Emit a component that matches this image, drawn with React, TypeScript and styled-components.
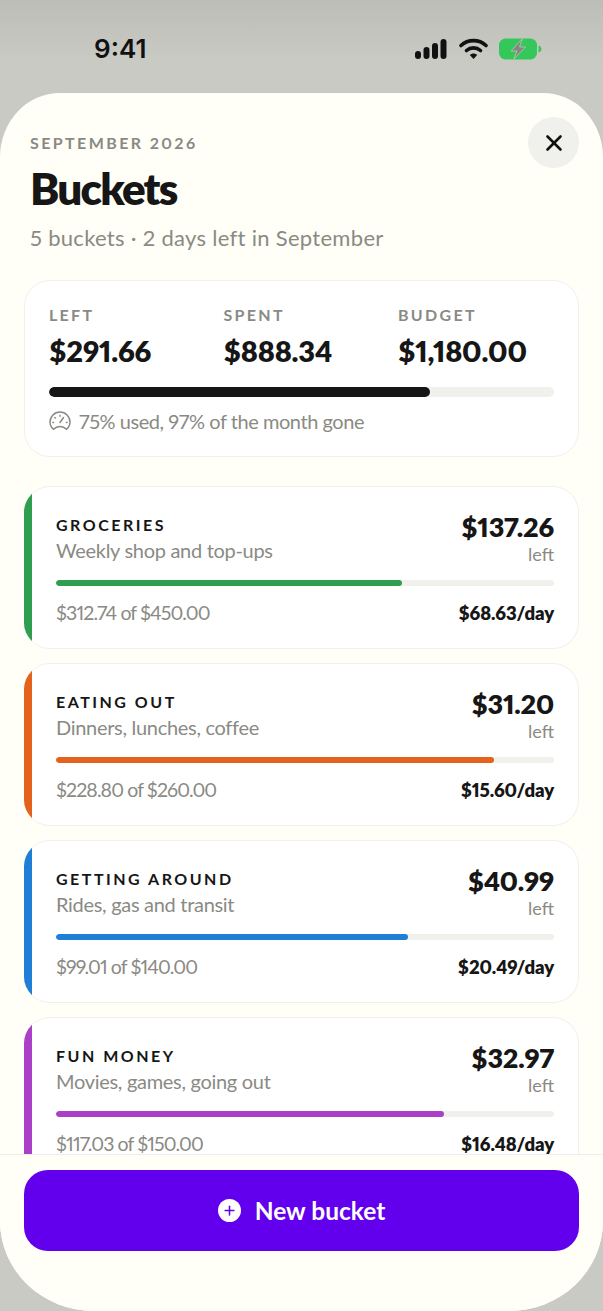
import React from "react";
import styled, { createGlobalStyle } from "styled-components";
import { Plus, X } from "lucide-react";

const GlobalStyle = createGlobalStyle`
  html, body {
    margin: 0;
    padding: 0;
    background: #c9c9c3;
    font-family: "Lato", "Liberation Sans", sans-serif;
    font-variant-numeric: proportional-nums;
  }
`;

const Screen = styled.div`
  width: 603px;
  height: 1311px;
  display: flex;
  flex-direction: column;
  overflow: hidden;
  background: linear-gradient(#bdbdb8 0, #cacac4 60px, #cacac4 100%);
`;

const StatusBar = styled.div`
  height: 93px;
  flex: none;
  display: flex;
  align-items: flex-start;
  justify-content: space-between;
  padding: 32px 61px 0 94px;
  box-sizing: border-box;
`;

const Clock = styled.div`
  font-family: "Inter", sans-serif;
  font-size: 26px;
  line-height: 34px;
  font-weight: 600;
  color: #111;
`;

const StatusIcons = styled.div`
  display: flex;
  align-items: center;
  gap: 11.500px;
  height: 34px;
`;

const Sheet = styled.div`
  flex: 1;
  min-height: 0;
  display: flex;
  flex-direction: column;
  overflow: hidden;
  background: #fffff7;
  border-radius: 60px 60px 94px 94px / 64px 64px 90px 90px;
`;

const Scroller = styled.div`
  flex: 1;
  min-height: 0;
  overflow: hidden;
  padding: 0 24px;
`;

const Header = styled.div`
  position: relative;
  padding: 38px 6px 0;
  height: 187px;
  box-sizing: border-box;
`;

const Eyebrow = styled.div`
  font-size: 16px;
  line-height: 24px;
  font-weight: 700;
  letter-spacing: 2.4px;
  color: #8a8a84;
`;

const Title = styled.h1`
  margin: 8px 0 0;
  font-size: 44px;
  line-height: 50px;
  font-weight: 800;
  letter-spacing: -1.8px;
  color: #161616;
`;

const Subtitle = styled.div`
  margin-top: 11px;
  font-size: 22px;
  line-height: 28px;
  font-weight: 400;
  letter-spacing: 0.3px;
  color: #8a8a84;
`;

const CloseButton = styled.button`
  position: absolute;
  top: 24px;
  right: 0;
  width: 51px;
  height: 51px;
  border: 0;
  padding: 0;
  border-radius: 50%;
  background: #f0f0ec;
  color: #111;
  display: flex;
  align-items: center;
  justify-content: center;
`;

const Card = styled.div`
  background: #fff;
  border: 1px solid #f1f1ea;
  box-sizing: border-box;
  border-radius: 26px;
`;

const Summary = styled(Card)`
  height: 177px;
  padding: 23px 24px 0;
`;

const Stats = styled.div`
  display: grid;
  grid-template-columns: repeat(3, 174.5px);
`;

const StatLabel = styled.div`
  font-size: 16px;
  line-height: 22px;
  font-weight: 700;
  letter-spacing: 2.3px;
  color: #8a8a84;
`;

const StatValue = styled.div`
  margin-top: 6px;
  font-size: 29px;
  line-height: 38px;
  font-weight: 800;
  letter-spacing: -0.2px;
  color: #161616;
`;

const Track = styled.div<{ $height: number }>`
  height: ${(p) => p.$height}px;
  border-radius: ${(p) => p.$height / 2}px;
  background: #f0f0ec;
  overflow: hidden;
`;

const Fill = styled.div<{ $color: string }>`
  height: 100%;
  border-radius: inherit;
  background: ${(p) => p.$color};
`;

const SummaryTrack = styled(Track)`
  margin-top: 17px;
`;

const PaceRow = styled.div`
  margin-top: 10px;
  display: flex;
  align-items: center;
  gap: 8px;
  font-size: 20px;
  line-height: 28px;
  letter-spacing: -0.45px;
  color: #8a8a84;
`;

const BucketList = styled.div`
  margin-top: 29px;
  display: flex;
  flex-direction: column;
  gap: 14px;
`;

const BucketCard = styled(Card)`
  height: 163px;
  flex: none;
  display: flex;
  overflow: hidden;
  border-left: 0;
`;

const ColorBar = styled.div<{ $color: string }>`
  width: 8px;
  flex: none;
  background: ${(p) => p.$color};
`;

const BucketBody = styled.div`
  flex: 1;
  min-width: 0;
  padding: 24px 24px 0;
`;

const BucketTop = styled.div`
  display: flex;
  justify-content: space-between;
  height: 69px;
`;

const BucketName = styled.div`
  font-size: 16px;
  line-height: 28px;
  font-weight: 700;
  letter-spacing: 2.5px;
  color: #161616;
`;

const BucketNote = styled.div`
  font-size: 20px;
  line-height: 22px;
  letter-spacing: -0.3px;
  color: #8a8a84;
`;

const BucketAmount = styled.div`
  font-size: 27px;
  line-height: 32px;
  font-weight: 800;
  letter-spacing: -0.2px;
  text-align: right;
  color: #161616;
`;

const LeftLabel = styled.div`
  margin-top: 1px;
  font-size: 18px;
  line-height: 20px;
  text-align: right;
  color: #8a8a84;
`;

const BucketBottom = styled.div`
  margin-top: 11px;
  display: flex;
  justify-content: space-between;
  align-items: center;
  line-height: 30px;
`;

const Spent = styled.div`
  font-size: 19.500px;
  letter-spacing: -0.9px;
  color: #8a8a84;
`;

const PerDay = styled.div`
  padding-top: 1px;
  font-size: 18.500px;
  font-weight: 800;
  letter-spacing: -0.1px;
  color: #161616;
`;

const Footer = styled.div`
  flex: none;
  height: 157px;
  box-sizing: border-box;
  border-top: 1px solid #eeeee8;
  padding: 15px 24px 0;
  background: #fffff7;
`;

const NewButton = styled.button`
  width: 100%;
  height: 81px;
  border: 0;
  border-radius: 24px;
  background: #6200ee;
  color: #fff;
  display: flex;
  align-items: center;
  justify-content: center;
  gap: 14px;
  font-family: inherit;
  font-size: 24.500px;
  font-weight: 700;
`;

const PlusDisc = styled.span`
  width: 23px;
  height: 23px;
  border-radius: 50%;
  background: #fff;
  color: #6200ee;
  display: flex;
  align-items: center;
  justify-content: center;
`;

const buckets = [
  { name: "GROCERIES", note: "Weekly shop and top-ups", left: "$137.26", spent: "$312.74 of $450.00", day: "$68.63/day", pct: 69.5, color: "#2f9e4f" },
  { name: "EATING OUT", note: "Dinners, lunches, coffee", left: "$31.20", spent: "$228.80 of $260.00", day: "$15.60/day", pct: 88, color: "#e4621b" },
  { name: "GETTING AROUND", note: "Rides, gas and transit", left: "$40.99", spent: "$99.01 of $140.00", day: "$20.49/day", pct: 70.7, color: "#1f7fd6" },
  { name: "FUN MONEY", note: "Movies, games, going out", left: "$32.97", spent: "$117.03 of $150.00", day: "$16.48/day", pct: 78, color: "#ab3fc8" },
];

const stats = [
  { label: "LEFT", value: "$291.66" },
  { label: "SPENT", value: "$888.34" },
  { label: "BUDGET", value: "$1,180.00" },
];

const SignalIcon = () => (
  <svg width="32" height="20" viewBox="0 0 32 20" fill="#111">
    <rect x="0" y="12" width="6" height="8" rx="3" />
    <rect x="8.500" y="8" width="6" height="12" rx="3" />
    <rect x="17" y="4" width="6" height="16" rx="3" />
    <rect x="25.500" y="0" width="6" height="20" rx="3" />
  </svg>
);

const WifiIcon = () => (
  <svg width="29" height="22" viewBox="0 0 29 22" fill="none" stroke="#111" strokeWidth="3.600" strokeLinecap="round">
    <path d="M2 7.500C9 1 20 1 27 7.500" />
    <path d="M7.500 12.500C11.500 9 17.500 9 21.500 12.500" />
    <path d="M14.500 21L10.800 17C13 15 16 15 18.200 17Z" fill="#111" stroke="none" />
  </svg>
);

const BatteryIcon = () => (
  <svg width="43" height="22" viewBox="0 0 43 22">
    <rect x="0" y="0.500" width="38" height="21" rx="6.500" fill="#34c759" />
    <path d="M39.500 7.500C41.500 8 42.500 9.500 42.500 11C42.500 12.500 41.500 14 39.500 14.500Z" fill="#34c759" />
    <path d="M23.500 0.500L12 13H18L14.500 21.500L26.500 9H20.500Z" fill="#83877f" stroke="#a9c4a5" strokeWidth="1" />
  </svg>
);

const GaugeIcon = () => (
  <svg width="22" height="20" viewBox="0 0 22 20" fill="none" stroke="#8a8a84" strokeWidth="1.500" strokeLinecap="round" strokeLinejoin="round">
    <path d="M4.500 18.200C2.200 16.500 1 14 1 11A10 10 0 0 1 21 11C21 14 19.800 16.500 17.500 18.200C15.800 16.400 13.600 15.400 11 15.400C8.400 15.400 6.200 16.400 4.500 18.200Z" />
    <path d="M11 11.500L14.500 6.500" />
    <path d="M11 4.500V5.200M5.800 6.500L6.300 7M3.900 11.500H4.600M17.400 11.500H18.100" />
  </svg>
);

export default function App() {
  return (
    <>
      <GlobalStyle />
      <Screen>
        <StatusBar>
          <Clock>9:41</Clock>
          <StatusIcons>
            <SignalIcon />
            <WifiIcon />
            <BatteryIcon />
          </StatusIcons>
        </StatusBar>
        <Sheet>
          <Scroller>
            <Header>
              <Eyebrow>SEPTEMBER 2026</Eyebrow>
              <Title>Buckets</Title>
              <Subtitle>5 buckets · 2 days left in September</Subtitle>
              <CloseButton aria-label="Close">
                <X size={26} strokeWidth={2.4} />
              </CloseButton>
            </Header>
            <Summary>
              <Stats>
                {stats.map((s) => (
                  <div key={s.label}>
                    <StatLabel>{s.label}</StatLabel>
                    <StatValue>{s.value}</StatValue>
                  </div>
                ))}
              </Stats>
              <SummaryTrack $height={10}>
                <Fill $color="#161616" style={{ width: "75.5%" }} />
              </SummaryTrack>
              <PaceRow>
                <GaugeIcon />
                75% used, 97% of the month gone
              </PaceRow>
            </Summary>
            <BucketList>
              {buckets.map((b) => (
                <BucketCard key={b.name}>
                  <ColorBar $color={b.color} />
                  <BucketBody>
                    <BucketTop>
                      <div>
                        <BucketName>{b.name}</BucketName>
                        <BucketNote>{b.note}</BucketNote>
                      </div>
                      <div>
                        <BucketAmount>{b.left}</BucketAmount>
                        <LeftLabel>left</LeftLabel>
                      </div>
                    </BucketTop>
                    <Track $height={6}>
                      <Fill $color={b.color} style={{ width: `${b.pct}%` }} />
                    </Track>
                    <BucketBottom>
                      <Spent>{b.spent}</Spent>
                      <PerDay>{b.day}</PerDay>
                    </BucketBottom>
                  </BucketBody>
                </BucketCard>
              ))}
            </BucketList>
          </Scroller>
          <Footer>
            <NewButton>
              <PlusDisc>
                <Plus size={15} strokeWidth={2.4} />
              </PlusDisc>
              New bucket
            </NewButton>
          </Footer>
        </Sheet>
      </Screen>
    </>
  );
}
